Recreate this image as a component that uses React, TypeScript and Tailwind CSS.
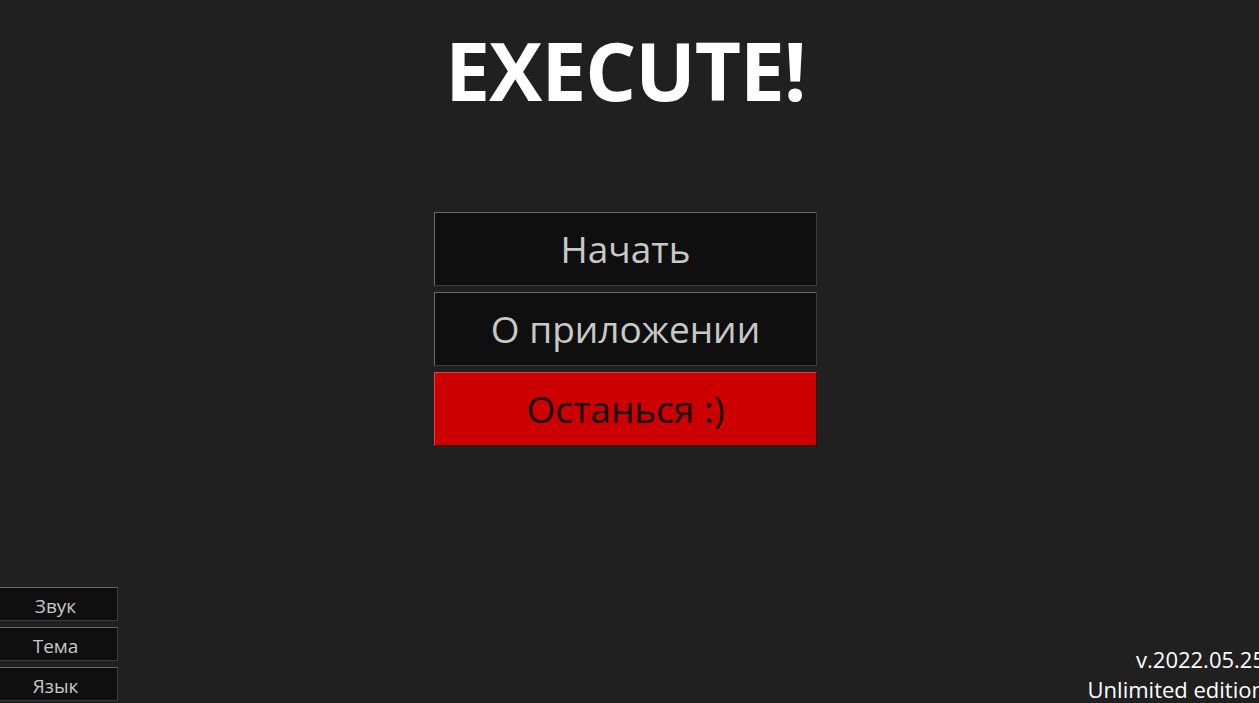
export default function App() {
  const menu = [
    { label: 'Начать', red: false },
    { label: 'О приложении', red: false },
    { label: 'Останься :)', red: true },
  ];
  const side = ['Звук', 'Тема', 'Язык'];

  return (
    <div
      className="relative h-[703px] w-full overflow-hidden bg-[#202020] flex flex-col"
      style={{ fontFamily: '"Open Sans", "Noto Sans", sans-serif' }}
    >
      <div className="pr-[8px]">
        {/* title */}
        <h1 className="mt-[18px] text-center text-[80px] leading-[104px] font-bold text-white tracking-[-1px]">
          EXECUTE!
        </h1>

        {/* main menu */}
        <div className="mt-[90px] flex flex-col items-center gap-[6px]">
          {menu.map((m) => (
            <button
              key={m.label}
              className={
                m.red
                  ? 'w-[383px] h-[74px] bg-[#cc0000] border border-t-[#d44] border-l-[#d44] border-r-[#3a0000] border-b-[#3a0000] text-[#111] text-[37px] leading-none pb-[2px]'
                  : 'w-[383px] h-[74px] bg-[#0f0f0f] border border-t-[#6a6a6a] border-l-[#6a6a6a] border-r-[#3c3c3c] border-b-[#3c3c3c] text-[#c8c8c8] text-[37px] leading-none pb-[2px]'
              }
            >
              {m.label}
            </button>
          ))}
        </div>
      </div>

      {/* bottom bar */}
      <div className="mt-auto flex items-end justify-between">
        <div className="flex flex-col gap-[6px] -ml-[7px] mb-[2px]">
          {side.map((s) => (
            <button
              key={s}
              className="w-[125px] h-[34px] bg-[#0f0f0f] border border-t-[#6a6a6a] border-l-[#6a6a6a] border-r-[#3c3c3c] border-b-[#3c3c3c] text-[#c8c8c8] text-[19px] leading-none pt-[4px]"
            >
              {s}
            </button>
          ))}
        </div>
        <div className="-mr-[6px] mb-[-1px] text-right text-white text-[22px] leading-[30px] whitespace-nowrap">
          <div>v.2022.05.25</div>
          <div>Unlimited edition</div>
        </div>
      </div>
    </div>
  );
}
